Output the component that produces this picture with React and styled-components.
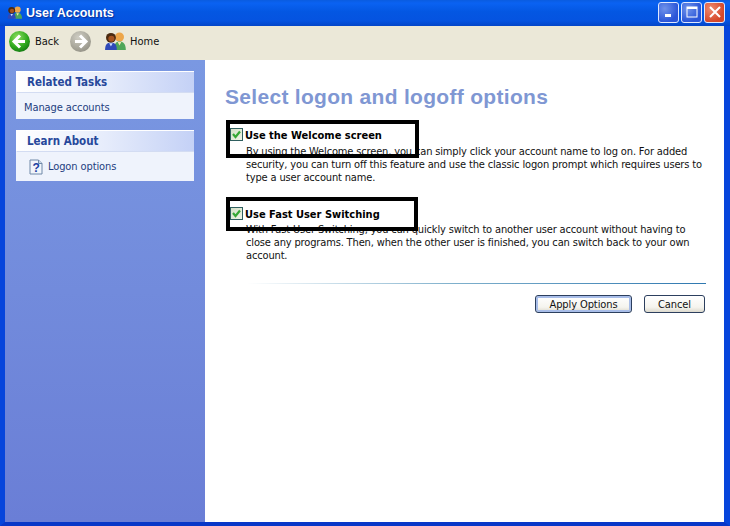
import React from 'react';
import styled, { createGlobalStyle } from 'styled-components';

const Global = createGlobalStyle`
  html, body {
    margin: 0;
    padding: 0;
    background: #fff;
  }
`;

const Window = styled.div`
  width: 730px;
  height: 526px;
  display: flex;
  flex-direction: column;
  overflow: hidden;
  font-family: "DejaVu Sans Condensed", "Noto Sans", sans-serif;
  font-size: 11px;
  color: #111;
`;

const TitleBar = styled.div`
  height: 26px;
  flex: none;
  display: flex;
  align-items: center;
  gap: 2px;
  padding: 0 5px 1px 7px;
  box-sizing: border-box;
  background: linear-gradient(180deg, #0a5ce0 0%, #0a62f2 12%, #0457e2 45%, #0553e0 80%, #0446c8 100%);
`;

const TitleText = styled.span`
  margin-left: 2px;
  color: #fff;
  font-size: 12.5px;
  font-weight: 700;
  font-family: "Liberation Sans", sans-serif;
  text-shadow: 1px 1px 1px #0a2f9a;
  flex: 1;
`;

const WinButton = styled.div`
  width: 21px;
  height: 21px;
  margin-bottom: 1px;
  box-sizing: border-box;
  border: 1px solid #dfe8ff;
  border-radius: 3px;
  background: ${(p) => (p.$close
    ? 'radial-gradient(circle at 30% 30%, #ee8a70, #d5482a 70%)'
    : 'radial-gradient(circle at 30% 30%, #6f92ea, #2a55d8 70%)')};
  display: flex;
  align-items: center;
  justify-content: center;
`;

const Frame = styled.div`
  flex: 1;
  display: flex;
  flex-direction: column;
  min-height: 0;
  border-left: 5px solid #0645dc;
  border-right: 6px solid #0645dc;
  border-bottom: 4px solid #0837c8;
`;

const Toolbar = styled.div`
  height: 34px;
  flex: none;
  box-sizing: border-box;
  display: flex;
  align-items: center;
  background: #ebe8d8;
  padding: 0 0 4px 3px;
`;

const ToolLabel = styled.span`
  margin-left: 4px;
  font-size: 11px;
`;

const Forward = styled.span`
  margin-left: 10px;
  display: flex;
`;

const HomeIcon = styled.span`
  margin-left: 12px;
  display: flex;
`;

const Content = styled.div`
  flex: 1;
  display: flex;
  min-height: 0;
`;

const Sidebar = styled.aside`
  width: 200px;
  flex: none;
  box-sizing: border-box;
  padding: 11px 11px 0;
  display: flex;
  flex-direction: column;
  gap: 11px;
  background: linear-gradient(180deg, #7a98e2 0%, #6a7ed6 100%);
`;

const Panel = styled.section`
  display: flex;
  flex-direction: column;
`;

const PanelHeader = styled.div`
  height: 22px;
  box-sizing: border-box;
  display: flex;
  align-items: center;
  padding-left: 10px;
  font-weight: 700;
  font-size: 11.5px;
  color: #27489b;
  background: linear-gradient(90deg, #ffffff 0%, #e6ecfb 50%, #c4d1f6 100%);
  border-top: 1px solid #fff;
  border-left: 1px solid #fff;
  border-bottom: 1px solid #d3dcf2;
`;

const PanelBody = styled.div`
  height: ${(p) => p.$height}px;
  box-sizing: border-box;
  display: flex;
  align-items: center;
  padding-left: ${(p) => p.$indent}px;
  padding-top: ${(p) => p.$top || 0}px;
  gap: 5px;
  background: #eff3fc;
  color: #24407f;
  letter-spacing: -0.1px;
`;

const Main = styled.main`
  flex: 1;
  min-width: 0;
  background: #fff;
  padding: 23px 19px 0 20px;
`;

const Heading = styled.h1`
  margin: 0 0 17px;
  font-family: "Liberation Sans", sans-serif;
  font-size: 21px;
  line-height: 28px;
  font-weight: 700;
  letter-spacing: 0.3px;
  color: #7f97d3;
`;

const Option = styled.div`
  position: relative;
  padding-left: 20px;
  margin-bottom: ${(p) => p.$gap}px;
`;

const Check = styled.span`
  position: absolute;
  left: 5px;
  top: 0;
  width: 13px;
  height: 13px;
  box-sizing: border-box;
  border: 1px solid #2f5f5f;
  background: linear-gradient(135deg, #d4e0c8, #eef4e6);
  display: flex;
  align-items: center;
  justify-content: center;
`;

const OptionTitle = styled.div`
  font-weight: 700;
  font-size: 11px;
  line-height: 15px;
  color: #000;
  margin-bottom: ${(p) => p.$gap}px;
`;

const OptionText = styled.p`
  margin: 0 0 0 1px;
  font-size: 11px;
  line-height: 13px;
  letter-spacing: -0.15px;
  color: #111;
  white-space: nowrap;
`;

const Highlight = styled.div`
  position: absolute;
  left: 1px;
  top: ${(p) => p.$top}px;
  width: ${(p) => p.$width}px;
  height: ${(p) => p.$height}px;
  box-sizing: border-box;
  border: 4px solid #000;
`;

const Divider = styled.div`
  height: 1px;
  margin: 0 -1px 11px 22px;
  background: linear-gradient(90deg, #fff 0%, #7fb0cc 45%, #2f78b0 100%);
`;

const Actions = styled.div`
  display: flex;
  justify-content: flex-end;
  gap: 12px;
`;

const Button = styled.button`
  width: ${(p) => p.$width}px;
  height: 18px;
  padding: 0;
  border: 1px solid #2c3f5e;
  border-radius: 3px;
  background: linear-gradient(180deg, #fff 0%, #f5f4ee 70%, #dcd9cd 100%);
  box-shadow: ${(p) => (p.$primary ? 'inset 0 0 0 2px #a8bde8' : 'none')};
  font-family: inherit;
  font-size: 11px;
  letter-spacing: -0.1px;
  color: #111;
`;

const BackIcon = ({ gray }) => (
  <svg width="23" height="23" viewBox="0 0 23 23">
    <defs>
      <radialGradient id={gray ? 'fg' : 'bg'} cx="0.4" cy="0.3" r="0.8">
        <stop offset="0" stopColor={gray ? '#d0cec4' : '#8fe060'} />
        <stop offset="0.6" stopColor={gray ? '#aaa89c' : '#2fa81e'} />
        <stop offset="1" stopColor={gray ? '#8f8d82' : '#0d6e10'} />
      </radialGradient>
    </defs>
    <circle cx="11.5" cy="11.5" r="10.5" fill={`url(#${gray ? 'fg' : 'bg'})`} />
    <path
      d={gray ? 'M11 5.5 L17 11.5 L11 17.5 M16.5 11.5 H6' : 'M12 5.5 L6 11.5 L12 17.5 M6.5 11.5 H17'}
      fill="none"
      stroke="#fff"
      strokeWidth="3"
      strokeLinejoin="miter"
    />
  </svg>
);

const UsersIcon = ({ width, height }) => (
  <svg width={width} height={height} viewBox="0 0 24 20">
    <circle cx="17" cy="5.5" r="5" fill="#eda64a" />
    <path d="M11 20 C11 13 13 10.5 17 10.5 C21 10.5 24 13 24 20 Z" fill="#4fa65a" />
    <path d="M15 11 L17 15 L19 11 Z" fill="#f4e3b0" />
    <circle cx="7.5" cy="6.5" r="5.5" fill="#4a2a10" />
    <circle cx="8" cy="7.5" r="3.4" fill="#a4521f" />
    <path d="M1 20 C1 14 3 12 7.5 12 C12 12 14 14 14 20 Z" fill="#2f49b8" />
    <path d="M5.5 12.5 L7.5 16 L9.5 12.5 Z" fill="#cfe0ff" />
  </svg>
);

const HelpIcon = () => (
  <svg width="14" height="16" viewBox="0 0 14 16">
    <path d="M1 1 H9.5 L13 4.5 V15 H1 Z" fill="#f1f5fb" stroke="#6f88a8" />
    <path d="M9.5 1 V4.5 H13" fill="#c9d6e6" stroke="#6f88a8" />
    <text x="3.5" y="13" fontFamily="Liberation Sans, sans-serif" fontWeight="700" fontSize="12" fill="#1d3fa0">?</text>
  </svg>
);

const CheckMark = () => (
  <svg width="11" height="11" viewBox="0 0 11 11">
    <path d="M2 5 L4.5 8 L9 2.5" fill="none" stroke="#35a835" strokeWidth="2.2" />
  </svg>
);

export default function App() {
  return (
    <>
      <Global />
      <Window>
        <TitleBar>
          <UsersIcon width={15} height={13} />
          <TitleText>User Accounts</TitleText>
          <WinButton>
            <svg width="12" height="12" viewBox="0 0 12 12"><rect x="2" y="8" width="6" height="3" fill="#fff" /></svg>
          </WinButton>
          <WinButton>
            <svg width="12" height="12" viewBox="0 0 12 12"><rect x="1" y="1" width="10" height="10" fill="none" stroke="#fff" /><rect x="1" y="1" width="10" height="2" fill="#fff" /></svg>
          </WinButton>
          <WinButton $close>
            <svg width="12" height="12" viewBox="0 0 12 12"><path d="M1 1 L11 11 M11 1 L1 11" stroke="#fff" strokeWidth="2" /></svg>
          </WinButton>
        </TitleBar>
        <Frame>
          <Toolbar>
            <BackIcon />
            <ToolLabel>Back</ToolLabel>
            <Forward><BackIcon gray /></Forward>
            <HomeIcon><UsersIcon width={22} height={18} /></HomeIcon>
            <ToolLabel>Home</ToolLabel>
          </Toolbar>
          <Content>
            <Sidebar>
              <Panel>
                <PanelHeader>Related Tasks</PanelHeader>
                <PanelBody $height={26} $indent={8} $top={3}>Manage accounts</PanelBody>
              </Panel>
              <Panel>
                <PanelHeader>Learn About</PanelHeader>
                <PanelBody $height={29} $indent={13}>
                  <HelpIcon />
                  Logon options
                </PanelBody>
              </Panel>
            </Sidebar>
            <Main>
              <Heading>Select logon and logoff options</Heading>
              <Option $gap={23}>
                <Check><CheckMark /></Check>
                <OptionTitle $gap={2}>Use the Welcome screen</OptionTitle>
                <OptionText>
                  By using the Welcome screen, you can simply click your account name to log on. For added<br />
                  security, you can turn off this feature and use the classic logon prompt which requires users to<br />
                  type a user account name.
                </OptionText>
                <Highlight $top={-8} $width={193} $height={38} />
              </Option>
              <Option $gap={21}>
                <Check><CheckMark /></Check>
                <OptionTitle $gap={1}>Use Fast User Switching</OptionTitle>
                <OptionText>
                  With Fast User Switching, you can quickly switch to another user account without having to<br />
                  close any programs. Then, when the other user is finished, you can switch back to your own<br />
                  account.
                </OptionText>
                <Highlight $top={-10} $width={192} $height={34} />
              </Option>
              <Divider />
              <Actions>
                <Button $primary $width={97}>Apply Options</Button>
                <Button $width={61}>Cancel</Button>
              </Actions>
            </Main>
          </Content>
        </Frame>
      </Window>
    </>
  );
}
